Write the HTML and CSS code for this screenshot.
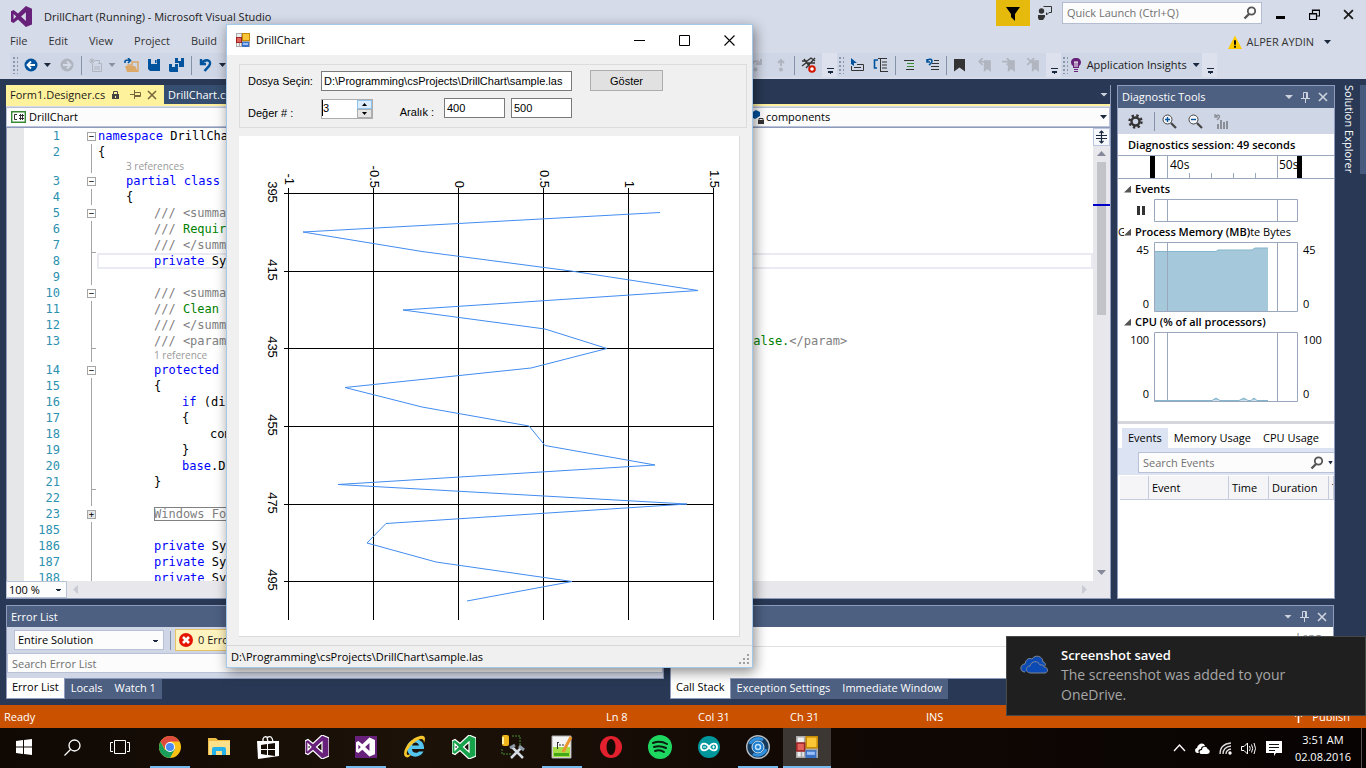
FILE: index.html
```html
<!DOCTYPE html>
<html lang="en">
<head>
<meta charset="utf-8">
<title>DrillChart (Running) - Microsoft Visual Studio</title>
<link rel="stylesheet" href="styles.css">
</head>
<body>
<svg class="defs" aria-hidden="true">
  <symbol id="pin" viewBox="0 0 9 11"><path d="M2.500 6V.5H6.500V6M5.500 1V6M0 6.500H9M4.500 7V11" fill="none" stroke="currentColor"/></symbol>
  <symbol id="cross" viewBox="0 0 10 10"><path d="M1 1L9 9M9 1L1 9" fill="none" stroke="currentColor" stroke-width="1.600"/></symbol>
  <symbol id="lens" viewBox="0 0 14 14"><circle cx="8.500" cy="5" r="3.700" fill="none" stroke="currentColor" stroke-width="1.800"/><path d="M6 8L1.500 12.500" stroke="currentColor" stroke-width="2.400"/></symbol>
  <symbol id="vs" viewBox="0 0 24 24"><path fill-rule="evenodd" d="M17 0L24 3V21L17 24L8 15.500L3 19.500L0 18V6L3 4.500L8 8.500ZM17 7L11.500 12L17 17ZM3 9V15L6 12Z"/></symbol>
  <symbol id="form" viewBox="0 0 14 14"><rect width="14" height="14" fill="#a9a9a9"/><path d="M1 1H5V4H1ZM1 10H3V13H1ZM4 10H5V13H4ZM12 10H13V13H12Z" fill="#eee"/><rect x="6" y="0" width="8" height="8" fill="#c58b05"/><rect x="7" y="1" width="6" height="6" fill="#fbc635"/><rect x="0" y="4" width="6" height="6" fill="#9c2727"/><rect x="1" y="5" width="4" height="4" fill="#e3625c"/><rect x="6" y="9" width="7" height="5" fill="#3b71c4"/><rect x="7" y="10" width="5" height="2" fill="#9ac0f7"/></symbol>
  <symbol id="mark" viewBox="0 0 12 12"><path d="M5 2H11V12L8 9.500L5 12Z" fill="#b1b5c0"/></symbol>
</svg>

<header class="head">
  <div class="titlebar">
    <svg class="vslogo" viewBox="0 0 24 24"><use href="#vs"/></svg>
    <h1 class="apptitle">DrillChart (Running) - Microsoft Visual Studio</h1>
    <button class="flag" aria-label="Notifications"><svg width="14" height="15" viewBox="0 0 14 15"><path d="M0 1H14L9 8V15L5 11V8Z"/></svg></button>
    <button class="feedback" aria-label="Send feedback"><svg width="16" height="16" viewBox="0 0 16 16"><path d="M6.500 1.500H14.500V7.500H12L9.500 10V7.500" fill="none" stroke="#333"/><circle cx="4.500" cy="6" r="2.700" fill="#333"/><path d="M1 10H8V12L6 15H2L1 13Z" fill="#333"/></svg></button>
    <label class="quick"><input type="text" aria-label="Quick Launch" placeholder="Quick Launch (Ctrl+Q)"><svg width="14" height="14"><use href="#lens"/></svg></label>
    <button class="winbtn" aria-label="Minimize"><svg width="11" height="11" viewBox="0 0 11 11"><path d="M1 7H10V10H1Z"/></svg></button>
    <button class="winbtn" aria-label="Restore"><svg width="11" height="11" viewBox="0 0 11 11"><path d="M3.500 4V1H10.500V7H8M.5 4.500H7.500V10.500H.5ZM3 1.500H10M0 5H8" fill="none" stroke="#000" stroke-width="1.200"/></svg></button>
    <button class="winbtn" aria-label="Close"><svg width="11" height="11" viewBox="0 0 10 10"><use href="#cross"/></svg></button>
  </div>
  <nav class="menubar">
    <a href="#file">File</a><a href="#edit">Edit</a><a href="#view">View</a><a href="#project">Project</a><a href="#build">Build</a>
    <button class="user"><svg width="14" height="15" viewBox="0 0 15 15"><path d="M7.500 0L15 14.500H0Z" fill="#fc0"/><path d="M6.500 5H8.500V10H6.500ZM6.500 11H8.500V13H6.500Z"/></svg>ALPER AYDIN<i class="arr"></i></button>
  </nav>
  <div class="toolbar">
    <div class="tools left">
      <i class="grip"></i>
      <button aria-label="Back"><svg width="14" height="14" viewBox="0 0 14 14"><circle cx="7" cy="7" r="6.500" fill="#00539c"/><path d="M11 7H4M7 3.500L3.500 7L7 10.500" fill="none" stroke="#fff" stroke-width="1.800"/></svg></button>
      <i class="arr"></i>
      <button aria-label="Forward"><svg width="14" height="14" viewBox="0 0 14 14"><circle cx="7" cy="7" r="6.500" fill="#b1b5c0"/><path d="M3 7H10M7 3.500L10.500 7L7 10.500" fill="none" stroke="#d6dbe9" stroke-width="1.800"/></svg></button>
      <i class="sep"></i>
      <button aria-label="New"><svg width="14" height="14" viewBox="0 0 14 14"><path d="M6 2.500H10.500V6M3.500 6V13.500H12.500V5.500H9M5 9H11M5 11H11M3 0V6M0 3H6M1 1L5 5M5 1L1 5" fill="none" stroke="#b1b5c0"/></svg></button>
      <i class="arr dim"></i>
      <button aria-label="Open"><svg width="16" height="14" viewBox="0 0 16 14"><path d="M4 13V7H8V4H14V14H10" fill="none" stroke="#dba868" stroke-width="1.500"/><path d="M1 8H11L14 14H3Z" fill="#dba868"/><path d="M1 5V3.500C1 2 2 2 6 2M4 0L6.500 2.500L4 5" fill="none" stroke="#00539c" stroke-width="1.600"/></svg></button>
      <button aria-label="Save"><svg width="14" height="14" viewBox="0 0 14 14"><path fill-rule="evenodd" d="M1 1H13V13H3L1 11ZM4 1V6H10V1ZM8 2H9.500V5H8Z" fill="#00539c"/></svg></button>
      <button aria-label="Save all"><svg width="16" height="14" viewBox="0 0 16 14"><path fill-rule="evenodd" d="M6 0H15V9H10V5H6ZM9 0V3H12V0ZM0 6H9V14H1L0 13ZM3 6V9H6V6Z" fill="#00539c"/></svg></button>
      <i class="sep"></i>
      <button aria-label="Undo"><svg width="14" height="14" viewBox="0 0 14 14"><path d="M2 1V6H7M2.500 5.500C5 1 12 1 11 6C10.500 8.500 8 10 5.500 13" fill="none" stroke="#00539c" stroke-width="2.400"/></svg></button>
      <i class="arr"></i>
    </div>
    <div class="tools mid">
      <button aria-label="Step over"><svg width="14" height="14" viewBox="0 0 14 14"><path d="M2 8C2 2 9 2 10 6M6 6H11V1" fill="none" stroke="#b1b5c0" stroke-width="2"/><circle cx="5.500" cy="11.500" r="2" fill="#b1b5c0"/></svg></button>
      <button aria-label="Step out"><svg width="14" height="14" viewBox="0 0 14 14"><path d="M7 8V2M4 5L7 2L10 5" fill="none" stroke="#b1b5c0" stroke-width="2"/><circle cx="7" cy="11.500" r="2" fill="#b1b5c0"/></svg></button>
      <i class="sep"></i>
      <button aria-label="Breakpoints"><svg width="16" height="16" viewBox="0 0 16 16"><path d="M1 4H6L10 1L14 4M1 9L5 6H14M3 2L9 10M14 1L5 11" fill="none" stroke="#333" stroke-width="1.300"/><circle cx="11" cy="12" r="2.800" fill="#fff" stroke="#d41500" stroke-width="2"/></svg></button>
      <i class="more"></i><i class="grip"></i>
      <button aria-label="Select"><svg width="14" height="14" viewBox="0 0 14 14"><path d="M1 0L7 5L4 5L4 8L1 6Z" fill="#00539c"/><path d="M1.500 8V12.500H13.500V6.500H7M4 9.500H11" fill="none" stroke="#333"/></svg></button>
      <button aria-label="Members"><svg width="16" height="14" viewBox="0 0 16 14"><path d="M5 2H1.500V10H4M2 2H5" fill="none" stroke="#00539c" stroke-width="1.600"/><path d="M5 .5H14M7.500 0V14M9 4H14M9 7H14M9 10H14M7 13.500H15" fill="none" stroke="#333"/></svg></button>
      <i class="sep"></i>
      <button aria-label="Comment"><svg width="14" height="14" viewBox="0 0 14 14"><path d="M2 2.500H12M4 11.500H12" stroke="#333"/><path d="M5 5.500H12M5 8.500H12" stroke="#388a34"/></svg></button>
      <button aria-label="Uncomment"><svg width="14" height="14" viewBox="0 0 14 14"><path d="M1 1V4H4M1 4C1 1 6 0 6 3C6 5 4 6 3 7" fill="none" stroke="#00539c" stroke-width="1.600"/><path d="M8 2.500H13M6 5.500H13M5 8.500H13M5 11.500H13" stroke="#333"/></svg></button>
      <i class="sep"></i>
      <button aria-label="Bookmark"><svg width="14" height="14" viewBox="0 0 14 14"><path d="M1 1H12V13.500L6.500 9.500L1 13.500Z" fill="#333"/></svg></button>
      <button aria-label="Previous bookmark"><svg width="14" height="14" viewBox="0 0 12 12"><use href="#mark"/><path d="M8 3H1M4 0L1 3L4 6" fill="none" stroke="#b1b5c0" stroke-width="1.500"/></svg></button>
      <button aria-label="Next bookmark"><svg width="14" height="14" viewBox="0 0 12 12"><use href="#mark"/><path d="M0 3H7M4 0L7 3L4 6" fill="none" stroke="#b1b5c0" stroke-width="1.500"/></svg></button>
      <button aria-label="Clear bookmarks"><svg width="14" height="14" viewBox="0 0 12 12"><use href="#mark"/><path d="M1 0L7 6M7 0L1 6" stroke="#b1b5c0" stroke-width="1.500"/></svg></button>
      <i class="more"></i><i class="grip"></i>
      <button class="insights"><svg width="10" height="15" viewBox="0 0 10 15"><path d="M5 0C11 0 11 6 8 8V10H2V8C-1 6-1 0 5 0ZM3 11H7V12H3ZM3 13H7V14H3Z" fill="#68217a"/><path d="M3 4H7M4 4V9M6 4V9" fill="none" stroke="#fff"/></svg>Application Insights<i class="arr"></i></button>
      <i class="more"></i>
    </div>
  </div>
</header>

<main class="work">
  <section class="editor">
    <div class="tabs">
      <a class="doc on" href="#designer">Form1.Designer.cs<svg width="7" height="8" viewBox="0 0 7 8"><path d="M1.500 3V.5H5.500V3" fill="none" stroke="#444"/><path fill-rule="evenodd" d="M0 3H7V8H0ZM3 5V7H4V5Z" fill="#444"/></svg><svg class="side" width="9" height="11"><use href="#pin"/></svg><svg width="10" height="10"><use href="#cross"/></svg></a>
      <a class="doc" href="#drill">DrillChart.cs</a>
      <i class="arr light"></i>
    </div>
    <div class="navbar">
      <button class="scope"><svg width="15" height="12" viewBox="0 0 15 12"><path d="M.7.7H14.300V11.300H.7Z" fill="#fff" stroke="#388a34" stroke-width="1.400"/><path d="M6 3.500H3.500V8.500H6M9.500 3V9M11.500 3V9M8 4.500H13M8 7.500H13" fill="none" stroke="#333"/></svg>DrillChart</button>
      <button class="scope member"><svg width="15" height="15" viewBox="0 0 15 15"><path d="M0 3L5 0L9 2V6L4 9L0 7Z" fill="#00539c"/><path d="M8 10.500V8.500H12V10.500" fill="none" stroke="#333"/><path d="M7 10H13V14H7Z" fill="#333"/></svg>components<i class="arr"></i></button>
    </div>
    <div class="codearea">
      <div class="code">
        <div class="row"><b>1</b><i class="fold box">−</i><code><em>namespace</em> DrillChart</code></div>
        <div class="row"><b>2</b><i class="fold"></i><code>{</code></div>
        <div class="row ref"><b></b><i class="fold"></i><code class="in1">3 references</code></div>
        <div class="row"><b>3</b><i class="fold box">−</i><code class="in1"><em>partial</em> <em>class</em> Form1</code></div>
        <div class="row"><b>4</b><i class="fold"></i><code class="in1">{</code></div>
        <div class="row"><b>5</b><i class="fold box">−</i><code class="in2"><s>/// &lt;summary&gt;</s></code></div>
        <div class="row"><b>6</b><i class="fold"></i><code class="in2"><s>///</s> <u>Required designer variable.</u></code></div>
        <div class="row"><b>7</b><i class="fold end"></i><code class="in2"><s>/// &lt;/summary&gt;</s></code></div>
        <div class="row current"><b>8</b><i class="fold"></i><code class="in2"><em>private</em> System.ComponentModel</code></div>
        <div class="row"><b>9</b><i class="fold"></i><code></code></div>
        <div class="row"><b>10</b><i class="fold box">−</i><code class="in2"><s>/// &lt;summary&gt;</s></code></div>
        <div class="row"><b>11</b><i class="fold"></i><code class="in2"><s>///</s> <u>Clean up any resources being used.</u></code></div>
        <div class="row"><b>12</b><i class="fold"></i><code class="in2"><s>/// &lt;/summary&gt;</s></code></div>
        <div class="row"><b>13</b><i class="fold end"></i><code class="in2 lead"><s>/// &lt;param name="disposing"&gt;</s></code><code><u>false.</u><s>&lt;/param&gt;</s></code></div>
        <div class="row ref"><b></b><i class="fold"></i><code class="in2">1 reference</code></div>
        <div class="row"><b>14</b><i class="fold box">−</i><code class="in2"><em>protected</em> <em>override</em></code></div>
        <div class="row"><b>15</b><i class="fold"></i><code class="in2">{</code></div>
        <div class="row"><b>16</b><i class="fold"></i><code class="in3"><em>if</em> (disposing)</code></div>
        <div class="row"><b>17</b><i class="fold"></i><code class="in3">{</code></div>
        <div class="row"><b>18</b><i class="fold"></i><code class="in4">components.Dispose();</code></div>
        <div class="row"><b>19</b><i class="fold"></i><code class="in3">}</code></div>
        <div class="row"><b>20</b><i class="fold"></i><code class="in3"><em>base</em>.Dispose(disposing);</code></div>
        <div class="row"><b>21</b><i class="fold end"></i><code class="in2">}</code></div>
        <div class="row"><b>22</b><i class="fold"></i><code></code></div>
        <div class="row"><b>23</b><i class="fold box shut">+</i><code class="in2"><s class="region">Windows Form Designer</s></code></div>
        <div class="row"><b>185</b><i class="fold"></i><code></code></div>
        <div class="row"><b>186</b><i class="fold"></i><code class="in2"><em>private</em> System.Windows</code></div>
        <div class="row"><b>187</b><i class="fold"></i><code class="in2"><em>private</em> System.Windows</code></div>
        <div class="row"><b>188</b><i class="fold"></i><code class="in2"><em>private</em> System.Windows</code></div>
      </div>
      <div class="vscroll">
        <button class="split" aria-label="Split"><svg width="13" height="14" viewBox="0 0 13 14"><path d="M1 5.500H12M1 8.500H12M6.500 1V13M4.500 3L6.500 1L8.500 3M4.500 11L6.500 13L8.500 11" fill="none" stroke="#1b293e" stroke-width="1.200"/></svg></button>
        <i class="up"></i><i class="thumb"></i><i class="down"></i>
      </div>
    </div>
    <div class="editfoot"><select class="zoomsel" aria-label="Zoom"><option>100 %</option></select><i class="lft"></i><i class="rgt"></i></div>
  </section>

  <aside class="diag">
    <h2 class="ptitle">Diagnostic Tools<span class="pact"><i class="arr light"></i><svg width="9" height="11"><use href="#pin"/></svg><svg width="10" height="10"><use href="#cross"/></svg></span></h2>
    <div class="dtools">
      <button aria-label="Settings"><svg width="15" height="15" viewBox="0 0 15 15"><circle cx="7.500" cy="7.500" r="4" fill="none" stroke="#333" stroke-width="2.400"/><circle cx="7.500" cy="7.500" r="6" fill="none" stroke="#333" stroke-width="2.400" stroke-dasharray="2.360 2.360"/></svg></button>
      <i class="sep"></i>
      <button aria-label="Zoom in"><svg width="15" height="15" viewBox="0 0 15 15"><circle cx="5.500" cy="5.500" r="4.500" fill="#f4f6fa" stroke="#444"/><path d="M9 9L14 14" stroke="#444" stroke-width="2.200"/><path d="M3 5.500H8M5.500 3V8" stroke="#00539c" stroke-width="1.400"/></svg></button>
      <button aria-label="Zoom out"><svg width="15" height="15" viewBox="0 0 15 15"><circle cx="5.500" cy="5.500" r="4.500" fill="#f4f6fa" stroke="#444"/><path d="M9 9L14 14" stroke="#444" stroke-width="2.200"/><path d="M3 5.500H8" stroke="#00539c" stroke-width="1.400"/></svg></button>
      <button aria-label="Reset view"><svg width="15" height="15" viewBox="0 0 15 15"><path d="M3 15V10M6 15V6M9 15V8M12 15V7" transform="translate(1 0)" stroke="#8d8f98" stroke-width="2"/><path d="M1 0V3H4M1 3C3 0 7 1 5 4L3 6" fill="none" stroke="#8d8f98" stroke-width="1.300"/></svg></button>
    </div>
    <h3 class="session">Diagnostics session: 49 seconds</h3>
    <svg class="ruler" viewBox="0 0 216 24" role="img" aria-label="Timeline"><path d="M0 .5H216M0 23.500H216M49.500 1V23M159.500 1V23M71.500 18V23M93.500 18V23M115.500 18V23M137.500 18V23" stroke="#9aa7bd" fill="none"/><text x="52" y="14">40s</text><text x="161" y="14">50s</text><path d="M32 1H37V23H32ZM179 1H184V23H179Z"/></svg>
    <h4 class="lane"><i class="tri"></i>Events</h4>
    <div class="graph"><span class="ax pause"><svg width="9" height="9" viewBox="0 0 9 9"><path d="M0 0H3V9H0ZM5 0H8V9H5Z" fill="#333"/></svg></span><svg class="plot low" viewBox="0 0 144 23"><path d="M.5.5H143.500V22.500H.5ZM13.500 0V23M123.500 0V23"/></svg></div>
    <h4 class="lane mem"><span class="gc">G</span><i class="tri"></i>Process Memory (MB)<span class="bytes">te Bytes</span></h4>
    <div class="graph"><span class="ax"><span>45</span><span>0</span></span><svg class="plot" viewBox="0 0 144 70"><path class="fill" d="M1 9.500H62L64 8H98L101 6H114V69H1Z"/><path class="edge" d="M1 9.500H62L64 8H98L101 6H114"/><path d="M.5.500H143.500V69.500H.5ZM13.500 0V70M123.500 0V70"/></svg><span class="ax r"><span>45</span><span>0</span></span></div>
    <h4 class="lane"><i class="tri"></i>CPU (% of all processors)</h4>
    <div class="graph"><span class="ax"><span>100</span><span>0</span></span><svg class="plot" viewBox="0 0 144 70"><path d="M.5.500H143.500V69.500H.5ZM13.500 0V70M123.500 0V70"/><path class="edge shade" d="M1 68.500H58L62 66L66 68.500H85L90 66L94 68.500H97L100 66L103 68.500H114"/></svg><span class="ax r"><span>100</span><span>0</span></span></div>
    <hr class="divider">
    <nav class="dtabs"><a class="on" href="#ev">Events</a><a href="#mu">Memory Usage</a><a href="#cu">CPU Usage</a></nav>
    <div class="dsearch"><label><input type="text" aria-label="Search Events" placeholder="Search Events"><svg width="14" height="14"><use href="#lens"/></svg><i class="arr"></i></label></div>
    <table class="events"><thead><tr><th class="c0"></th><th class="c1">Event</th><th class="c2">Time</th><th class="c3">Duration</th><th>T</th></tr></thead></table>
  </aside>
  <aside class="rail"><a href="#sol">Solution Explorer</a><i></i></aside>
</main>

<section class="panels">
  <div class="panel errors">
    <div class="pbox">
      <h2 class="ptitle">Error List</h2>
      <div class="filters"><select aria-label="Scope"><option>Entire Solution</option></select><i class="sep"></i><button class="errbtn"><svg width="14" height="14" viewBox="0 0 14 14"><circle cx="7" cy="7" r="7" fill="#e51400"/><path d="M4 4L10 10M10 4L4 10" stroke="#fff" stroke-width="2.600"/></svg>0 Errors</button></div>
      <input class="esearch" type="text" aria-label="Search Error List" placeholder="Search Error List">
    </div>
    <nav class="ptabs"><a class="on" href="#el">Error List</a><a href="#lo">Locals</a><a href="#w1">Watch 1</a></nav>
  </div>
  <div class="panel stack">
    <div class="pbox">
      <h2 class="ptitle">Call Stack<span class="pact"><i class="arr light"></i><svg width="9" height="11"><use href="#pin"/></svg><svg width="10" height="10"><use href="#cross"/></svg></span></h2>
      <div class="cols"><span>Lang</span></div>
    </div>
    <nav class="ptabs"><a class="on" href="#cs">Call Stack</a><a href="#es">Exception Settings</a><a href="#iw">Immediate Window</a></nav>
  </div>
</section>

<footer class="status"><span class="ready">Ready</span><span>Ln 8</span><span>Col 31</span><span class="ch">Ch 31</span><span class="ins">INS</span><a href="#publish"><svg width="9" height="11" viewBox="0 0 9 11"><path d="M4.500 11V1M1 4.500L4.500 1L8 4.500" fill="none" stroke="#fff" stroke-width="1.600"/></svg>Publish</a></footer>

<nav class="taskbar">
  <button class="sys" aria-label="Start"><svg width="16" height="16" viewBox="0 0 16 16"><path d="M0 2L7 1V7.500H0ZM8 1L16 0V7.500H8ZM0 8.500H7V15L0 14ZM8 8.500H16V16L8 15Z" fill="#fff"/></svg></button>
  <button class="sys" aria-label="Search"><svg width="17" height="17" viewBox="0 0 17 17"><circle cx="10.500" cy="6.500" r="5.500" fill="none" stroke="#fff" stroke-width="1.300"/><path d="M6.500 10.500L.5 16.500" stroke="#fff" stroke-width="1.300"/></svg></button>
  <button class="sys wide" aria-label="Task view"><svg width="20" height="14" viewBox="0 0 20 14"><path d="M4.500.5H15.500V13.500H4.500ZM3 2.500H.5V11.500H3M17 2.500H19.500V11.500H17" fill="none" stroke="#fff"/></svg></button>
  <button class="run" aria-label="Chrome"><svg width="22" height="22" viewBox="0 0 22 22"><circle cx="11" cy="11" r="11" fill="#fbc116"/><path d="M1.500 5.500A11 11 0 0 0 11 22L16 13L6 14Z" fill="#1a9f5b"/><path d="M1.500 5.500A11 11 0 0 1 20.500 5.500H11L6 13Z" fill="#de4a3d"/><circle cx="11" cy="11" r="5" fill="#fff"/><circle cx="11" cy="11" r="4" fill="#4a8af4"/></svg></button>
  <button aria-label="File Explorer"><svg width="22" height="20" viewBox="0 0 22 20"><path d="M0 1H8L10 3H22V18H0Z" fill="#eebb44"/><path d="M1 4H22V18H1Z" fill="#ffe08a"/><path d="M4 18V12Q4 10 6 10H16Q18 10 18 12V18H14V14H8V18Z" fill="#25b1ec"/></svg></button>
  <button aria-label="Store"><svg width="22" height="24" viewBox="0 0 22 24"><path d="M6 7V4Q7 1 10 2L11 7M10 3Q15-1 16 7" fill="none" stroke="#fff" stroke-width="1.300"/><path d="M0 6L22 6V21L1 24Z" fill="#fff"/><path d="M4 10L10 9V14H4ZM11 9L18 8V14H11ZM4 15H10V20L4 19ZM11 15H18V21L11 20Z" fill="#160d04"/></svg></button>
  <button aria-label="Visual Studio"><svg width="24" height="24"><use href="#vs" fill="#68217a" stroke="#fff" stroke-width="1.200"/></svg></button>
  <button class="run" aria-label="Visual Studio debugger"><svg class="vsbox" width="22" height="22"><use href="#vs" x="1" y="1" width="19" height="20" fill="#fff"/></svg></button>
  <button aria-label="Internet Explorer"><svg width="24" height="24" viewBox="0 0 24 24"><path fill-rule="evenodd" d="M21 14H9C9 18 14 19 16 16.500H20.500C17 24.500 4 23 4 13C4 2 22 1 21 14M9 10.500H16C15 6.500 10 6.500 9 10.500" fill="#53c5ee"/><path d="M3 22C-3 19 6 3 17 1C22 0 23 3 21 8C21 4 19 3 15 5C7 9 1 19 5 20L8 19C7 22 4 23 3 22Z" fill="#f6c62c"/></svg></button>
  <button aria-label="Visual Studio Team"><svg width="24" height="24"><use href="#vs" fill="#15a24a" stroke="#fff" stroke-width="1.200"/></svg></button>
  <button aria-label="Tools"><svg width="24" height="24" viewBox="0 0 24 24"><rect x="1" y="0" width="7" height="11" rx="2" fill="#f1b51c"/><path d="M2 2V9" stroke="#fff0a0" stroke-width="2"/><path d="M11 1H19V10M1 14V19H10" fill="none" stroke="#4a8f37" stroke-dasharray="2 1"/><path d="M11 12L22 23M21 12L10 23" stroke="#d5dbe2" stroke-width="2.500"/><path d="M9 13L14 10M18 11L23 15" stroke="#8e9aa8" stroke-width="3"/></svg></button>
  <button class="run" aria-label="Notepad"><svg width="22" height="24" viewBox="0 0 22 24"><path d="M1 1H20V23H1Z" fill="#f4f4f4" stroke="#aaa"/><path d="M2 12H19V22H2Z" fill="#a5df45"/><path d="M3 18H18V21H3Z" fill="#43a818"/><path d="M6.500 7V14M8 10H10M11 10H13M6 7.500H8" stroke="#333"/><path d="M20 2L12 17" stroke="#e9962e" stroke-width="3"/></svg></button>
  <button aria-label="Opera"><svg width="22" height="22" viewBox="0 0 22 22"><circle cx="11" cy="11" r="11" fill="#e3202d"/><ellipse cx="11" cy="11" rx="4.500" ry="8" fill="#160a05"/></svg></button>
  <button aria-label="Spotify"><svg width="24" height="24" viewBox="0 0 24 24"><circle cx="12" cy="12" r="12" fill="#1ed760"/><path d="M5 8Q12 5 19 9M6 12Q12 10 18 13M7 16Q12 14 16 17" fill="none" stroke="#0b1d10" stroke-width="2" stroke-linecap="round"/></svg></button>
  <button aria-label="Arduino"><svg width="22" height="22" viewBox="0 0 22 22"><circle cx="11" cy="11" r="11" fill="#00979c"/><path d="M11 11C8 6 3 7 3 11S8 16 11 11C14 6 19 7 19 11S14 16 11 11" fill="none" stroke="#fff" stroke-width="1.800"/><path d="M5 11H8M14 11H17M15.500 9.500V12.500" stroke="#fff"/></svg></button>
  <button class="run" aria-label="Sync"><svg width="24" height="24" viewBox="0 0 24 24"><circle cx="12" cy="12" r="11.300" fill="#163a5b" stroke="#b5bcc3" stroke-width="1.400"/><path d="M4 9A9 9 0 0 1 17 5M20 14A9 9 0 0 1 7 19" fill="none" stroke="#2c8fe0" stroke-width="3"/><circle cx="12" cy="12" r="6" fill="#1f7dd0" stroke="#d0e8fb"/><circle cx="12" cy="12" r="2.500" fill="none" stroke="#bfe3ff" stroke-width="1.500"/></svg></button>
  <button class="run act" aria-label="DrillChart"><svg width="22" height="22"><use href="#form"/></svg></button>
  <div class="tray">
    <svg width="13" height="8" viewBox="0 0 13 8"><path d="M1 7L6.500 1L12 7" fill="none" stroke="#fff" stroke-width="1.300"/></svg>
    <svg width="15" height="11" viewBox="0 0 15 11"><path d="M2 10C-1 9 0 5 2 5C3 0 9-1 10 3C7 3 6 4 6 6C3 6 3 9 4 10Z" fill="#fff"/><path d="M6 11C4 10 4 7 7 7C7 3 12 3 12.500 6C16 7 15 11 12 11Z" fill="#fff"/></svg>
    <svg width="13" height="13" viewBox="0 0 13 13"><path d="M1 12Q1 2 12 1M4 12Q4 5 12 4M7 12Q7 8 12 7" fill="none" stroke="#ddd" stroke-width="1.300"/><circle cx="11" cy="11" r="1.700" fill="#fff"/></svg>
    <svg width="16" height="13" viewBox="0 0 16 13"><path d="M.5 4.500H3L6.500 1V12L3 8.500H.5ZM8.500 4Q10 6.500 8.500 9M10.500 2.500Q13 6.500 10.500 10.500M13 1Q16 6.500 13 12" fill="none" stroke="#fff"/></svg>
    <svg width="16" height="15" viewBox="0 0 16 15"><path d="M0 0H16V12H10L8 15V12H0Z" fill="#fff"/><path d="M3 3.500H13M3 6.500H13M3 9.500H9" stroke="#111"/></svg>
    <time>3:51 AM<br>02.08.2016</time>
  </div>
</nav>

<section class="win" role="dialog" aria-label="DrillChart">
  <header class="wtitle"><svg width="14" height="14"><use href="#form"/></svg><span>DrillChart</span>
    <button aria-label="Minimize"><svg width="11" height="11" viewBox="0 0 11 11"><path d="M0 5.500H11" stroke="#000"/></svg></button>
    <button aria-label="Maximize"><svg width="11" height="11" viewBox="0 0 11 11"><path d="M.5.5H10.500V10.500H.5Z" fill="none" stroke="#000"/></svg></button>
    <button aria-label="Close"><svg width="11" height="11" viewBox="0 0 11 11"><path d="M.5.5L10.500 10.500M10.500.5L.5 10.500" stroke="#000" stroke-width="1.100"/></svg></button>
  </header>
  <form class="fields">
    <label for="f">Dosya Seçin:</label><input class="file" id="f" type="text" value="D:\Programming\csProjects\DrillChart\sample.las"><button class="go" type="button">Göster</button>
    <label class="drop" for="n">Değer # :</label><span class="spin"><input id="n" type="text" value="3"><span><button type="button" aria-label="Up"><i class="up"></i></button><button type="button" aria-label="Down"><i class="down"></i></button></span></span><label class="range" for="a">Aralık :</label><input id="a" type="text" value="400"><input type="text" aria-label="Aralık end" value="500">
  </form>
  <svg class="chart" viewBox="0 0 500 500" role="img" aria-label="Drill chart">
    <path class="grid" d="M49.500 52V484M134.500 52V484M219.500 52V484M304.500 52V484M389.500 52V484M474.500 52V484M45 57.500H475M45 135.500H475M45 212.500H475M45 290.500H475M45 368.500H475M45 445.500H475"/>
    <polyline points="421,76.500 64,96 183,115.500 332,135 459,154.500 164,174 306,193 368,212.500 292,232 106,251.500 183,271 290,290 306,309.500 416,329 99,348.500 448,368 147,387.500 128,407 197,426 333,445.500 228,465"/>
    <g class="top"><text transform="translate(46 49) rotate(90)">-1</text><text transform="translate(131 52) rotate(90)">-0.5</text><text transform="translate(216 52) rotate(90)">0</text><text transform="translate(301 52) rotate(90)">0.5</text><text transform="translate(386 52) rotate(90)">1</text><text transform="translate(471 52) rotate(90)">1.5</text></g>
    <g class="side"><text transform="translate(29 56) rotate(90)">395</text><text transform="translate(29 134) rotate(90)">415</text><text transform="translate(29 211) rotate(90)">435</text><text transform="translate(29 289) rotate(90)">455</text><text transform="translate(29 367) rotate(90)">475</text><text transform="translate(29 444) rotate(90)">495</text></g>
  </svg>
  <footer class="wstatus">D:\Programming\csProjects\DrillChart\sample.las<svg width="11" height="11" viewBox="0 0 11 11"><path d="M8 0H10V2H8ZM4 4H6V6H4ZM8 4H10V6H8ZM0 8H2V10H0ZM4 8H6V10H4ZM8 8H10V10H8Z" fill="#a0a0a0"/></svg></footer>
</section>

<section class="toast" role="status">
  <svg width="28" height="19" viewBox="0 0 28 19"><path d="M5 17C-1 17 0 9 5 9C6 3 10 3 12 4C15-1 23 1 23 7C25 7 26 9 25 11" fill="#0c4ab6" stroke="#7f8793"/><path d="M11 18C5 18 5 11 10 11C11 6 18 5 20 10C23 9 24 11 24 12C29 12 28 18 25 18Z" fill="#0c4ab6" stroke="#7f8793"/></svg>
  <div><strong>Screenshot saved</strong><p>The screenshot was added to your OneDrive.</p></div>
</section>
</body>
</html>
```
FILE: styles.css
```css
* { box-sizing: border-box; }
body { margin: 0; height: 100vh; min-height: 700px; display: flex; flex-direction: column; position: relative; overflow: hidden; background: #293955; color: #1b1b1b; font: 11px/16px "Open Sans", "Noto Sans", sans-serif; }
button, input, select { font: inherit; color: inherit; }
button { border: 0; padding: 0; background: none; }
a { color: inherit; text-decoration: none; }
h1, h2, h3, h4, p { margin: 0; font: inherit; }
svg { display: block; flex: none; }
i, em, s, u { font-style: normal; text-decoration: none; }
.defs { position: absolute; width: 0; height: 0; }

.arr { width: 7px; height: 4px; flex: none; background: #1b293e; clip-path: polygon(0 0, 100% 0, 50% 100%); }
.arr.dim { background: #8d919c; }
.arr.light { width: 8px; background: #ced4dd; }
.sep { width: 1px; height: 19px; flex: none; background: #8591a8; }
.grip { width: 6px; height: 18px; flex: none; background: radial-gradient(circle, #8b95ab 1px, transparent 1px) 0 0 / 4px 4px; }
.more { width: 15px; height: 25px; flex: none; background: linear-gradient(#1b293e, #1b293e) 5px 15px / 7px 1px no-repeat, linear-gradient(#1b293e, #1b293e) 6px 18px / 5px 2px no-repeat, linear-gradient(#1b293e, #1b293e) 8px 20px / 1px 1px no-repeat, #dde1ed; }

.head { background: #d6dbe9; flex: none; height: 79px; }
.titlebar { display: flex; height: 29px; padding: 0 9px 0 11px; }
.vslogo { width: 21px; height: 21px; margin-top: 6px; fill: #68217a; }
.apptitle { flex: 1; margin: 9px 0 0 12px; font-size: 11px; }
.flag { width: 34px; height: 26px; background: #e6b90d; display: grid; place-items: center; }
.feedback { width: 16px; margin: 5px 9px 0 7px; align-self: flex-start; }
.quick { display: flex; align-items: center; width: 200px; height: 22px; margin: 2px 10px 0 0; padding: 0 4px; background: #fcfcfc; border: 1px solid #b5bdd2; color: #555; }
.quick input { flex: 1; min-width: 0; border: 0; padding: 0; background: none; }
::placeholder { color: #717171; opacity: 1; }
.winbtn { width: 17px; height: 28px; margin-right: 17px; display: grid; place-items: center; }
.winbtn:last-child { margin-right: 0; }
.menubar { display: flex; gap: 21px; height: 24px; padding: 4px 35px 0 10px; color: #333; }
.user { display: flex; align-items: center; gap: 4px; margin: 0 0 0 auto; height: 18px; }
.user .arr { margin-left: 6px; }
.toolbar { display: flex; justify-content: space-between; padding: 0 150px 0 10px; }
.tools { display: flex; align-items: center; height: 24px; background: #cfd6e5; }
.tools button { width: 22px; height: 22px; display: grid; place-items: center; }
.left { width: 218px; padding-left: 2px; gap: 5px; }
.left .arr { margin: 0 2px 0 -1px; }
.left .grip { margin-right: -1px; }
.left button { width: 18px; }
.mid { gap: 1px; width: 470px; justify-content: space-between; }
.mid .more { height: 24px; margin-right: -1px; }
.tools .insights { display: flex; align-items: center; justify-content: flex-start; gap: 6px; width: auto; }

.work { flex: 1; min-height: 0; display: grid; grid-template-columns: minmax(0, 1fr) 218px 31px; padding: 6px 0 6px 6px; }
.editor { display: flex; flex-direction: column; min-height: 0; margin-right: 6px; border-bottom: 1px solid #8e9bbc; border-right: 1px solid #8e9bbc; }
.tabs { display: flex; align-items: center; height: 20px; flex: none; color: #fff; border-bottom: 1px solid #fff29d; background: #293955; }
.tabs > .arr { margin: 0 2px 0 auto; }
.doc { display: flex; align-items: center; height: 19px; padding: 2px 4px; background: #364e6f; }
.doc.on { width: 158px; height: 20px; gap: 7px; background: #fff29d; color: #1b1b1b; }
.doc.on svg { color: #75683e; }
.doc .side { transform: rotate(90deg); margin-left: 5px; }
.navbar { display: grid; grid-template-columns: 744px minmax(0, 1fr); height: 23px; flex: none; padding: 1px 0 0; border-top: 1px solid #fff29d; border-bottom: 1px solid #8e9bbc; background: #d6dbe9; }
.scope { display: flex; align-items: center; gap: 3px; padding: 0 4px; background: #fcfcfc; border: 1px solid #b8c1d6; color: #000; }
.scope .arr { margin-left: auto; margin-right: -2px; }
.member { gap: 0; padding-left: 0; }
.codearea { flex: 1; min-height: 0; display: flex; background: #fff; }
.code { flex: 1; min-width: 0; overflow: hidden; border-left: 1px solid #8e9bbc; background: linear-gradient(90deg, #e6e7e8 17px, #fff 17px); font: 12px/16px "DejaVu Sans Mono", "Liberation Mono", monospace; color: #000; }
.row { display: flex; height: 16px; }
.row b { width: 53px; flex: none; text-align: right; font-weight: normal; color: #2b91af; }
.row code { font: inherit; white-space: pre; }
.row em { color: #00f; }
.row s { color: #808080; }
.row u { color: #008000; }
.ref { height: 13px; font: 10px/13px "Open Sans", sans-serif; color: #999; }
.ref code { font: inherit; }
.in1 { padding-left: 28px; }
.in2 { padding-left: 56px; }
.in3 { padding-left: 84px; }
.in4 { padding-left: 112px; }
.lead { width: 648px; overflow: hidden; }
.fold { width: 9px; margin: 0 2px 0 27px; flex: none; background: linear-gradient(#a5a5a5, #a5a5a5) 4px 0 / 1px 100% no-repeat; }
.end { background: linear-gradient(#a5a5a5, #a5a5a5) 4px 0 / 1px 100% no-repeat, linear-gradient(#a5a5a5, #a5a5a5) 4px 100% / 5px 1px no-repeat; }
.box { height: 9px; margin-top: 4px; background: #fff; border: 1px solid #a5a5a5; font: 9px/7px "DejaVu Sans Mono", monospace; text-align: center; box-shadow: 0 0 0 1px #fff; }
.shut { background: #e6e7e8; }
.current { background: linear-gradient(#fff, #fff) 92px 2px / calc(100% - 94px) 12px no-repeat, linear-gradient(#eaeaf2, #eaeaf2) 90px 0 / 100% 16px no-repeat; }
.region { outline: 1px solid #808080; outline-offset: -1px; }
.vscroll { width: 17px; display: flex; flex-direction: column; align-items: center; background: #e8e8ec; }
.split { width: 17px; height: 18px; display: grid; place-items: center; border: 1px solid #bcc6de; background: #f5f7fb; }
.up, .down { width: 9px; height: 5px; background: #868999; clip-path: polygon(50% 0, 100% 100%, 0 100%); }
.down { clip-path: polygon(0 0, 100% 0, 50% 100%); }
.vscroll .up { margin: 5px 0 6px; }
.vscroll .down { margin: auto 0 6px; }
.thumb { width: 9px; height: 153px; background: #c2c3c9; position: relative; }
.thumb::after { content: ""; position: absolute; left: -4px; right: -4px; top: 42px; height: 2px; background: #0000c8; }
.editfoot { display: flex; align-items: center; height: 17px; flex: none; background: #e8e8ec; }
select { appearance: none; border: 1px solid #b8c1d6; border-radius: 0; padding: 0 4px; color: #000; background: linear-gradient(#1b293e, #1b293e) right 5px center / 5px 1px no-repeat, linear-gradient(#1b293e, #1b293e) right 6px top calc(50% + 1px) / 3px 1px no-repeat, #fcfcfc; }
.zoomsel { width: 61px; height: 17px; padding: 0 2px; }
.lft, .rgt { width: 5px; height: 9px; margin-left: 6px; background: #c9cad3; clip-path: polygon(100% 0, 100% 100%, 0 50%); }
.rgt { margin: 0 23px 0 auto; clip-path: polygon(0 0, 100% 50%, 0 100%); }

.ptitle { display: flex; align-items: center; justify-content: space-between; height: 22px; flex: none; padding: 0 5px 0 4px; background: #4d6082; color: #fff; }
.pact { display: flex; align-items: center; gap: 8px; padding-right: 1px; color: #ced4dd; }
.diag { display: flex; flex-direction: column; min-height: 0; overflow: hidden; border: 1px solid #8e9bbc; background: #fff; color: #000; }
.dtools { display: flex; align-items: center; gap: 11px; height: 26px; flex: none; padding-left: 10px; background: #cfd6e5; }
.dtools .sep { margin-right: -4px; }
.session { padding: 3px 10px 2px; font-weight: 600; }
.ruler { width: 216px; height: 24px; }
.ruler text { font-size: 12px; }
.lane { display: flex; align-items: center; height: 20px; flex: none; padding-left: 6px; font-weight: 600; white-space: nowrap; }
.tri { width: 7px; height: 7px; margin-right: 4px; flex: none; background: #555; clip-path: polygon(100% 0, 100% 100%, 0 100%); }
.gc, .bytes { font-weight: 400; }
.mem { padding-left: 0; overflow: hidden; }
.gc { width: 6px; overflow: hidden; }
.graph { display: flex; flex: none; }
.ax { width: 36px; display: flex; flex-direction: column; justify-content: space-between; align-items: flex-end; padding: 0 5px 0 0; }
.ax.r { align-items: flex-start; padding: 0 0 0 5px; }
.pause { justify-content: center; padding-right: 8px; }
.plot { width: 144px; height: 70px; fill: none; stroke: #9aa7bd; }
.plot.low { height: 23px; }
.plot .fill { fill: #a6c8db; stroke: none; }
.plot .edge { stroke: #83b5cc; }
.plot .shade { fill: #a6c8db; }
.divider { width: 100%; height: 3px; flex: none; margin: 19px 0 4px; border: 0; background: #d5d5dc; }
.dtabs { display: flex; flex: none; padding-left: 4px; white-space: nowrap; }
.dtabs a { height: 20px; padding: 2px 6px; }
.dtabs .on { background: #dce3f2; }
.dsearch { flex: none; padding: 4px 0 2px 20px; background: #dce3f2; }
.dsearch label { display: flex; align-items: center; height: 21px; padding-left: 4px; border: 1px solid #b8c1d6; border-right: 0; background: #fcfcfc; color: #555; }
.dsearch input { flex: 1; min-width: 0; border: 0; padding: 0; background: none; }
.dsearch .arr { width: 5px; margin: 0 1px 0 4px; }
.events { table-layout: fixed; width: 100%; margin-top: 1px; padding-left: 2px; border-spacing: 0; }
.events th { height: 24px; padding: 0 3px; text-align: left; font-weight: 400; background: #f5f5f7; border-right: 1px solid #c6cbdc; border-bottom: 1px solid #c6cbdc; overflow: hidden; }
.events .c0 { width: 29px; }
.events .c1 { width: 80px; }
.events .c2 { width: 40px; }
.events .c3 { width: 60px; }
.rail { display: flex; justify-content: space-between; align-items: flex-start; padding-left: 6px; color: #fff; }
.rail a { writing-mode: vertical-rl; }
.rail i { width: 6px; height: 89px; background: #465a7d; }

.panels { display: grid; grid-template-columns: 658px minmax(0, 1fr); gap: 6px; flex: none; padding: 0 32px 6px 6px; }
.pbox { height: 74px; border: 1px solid #8e9bbc; background: #fff; }
.errors .pbox { background: #cfd6e5; }
.errors .ptitle, .stack .ptitle { height: 21px; }
.filters { display: flex; align-items: center; gap: 4px; height: 26px; padding-left: 7px; }
.filters select { width: 150px; height: 20px; padding: 0 3px; }
.filters .sep { margin-left: 2px; }
.errbtn { display: flex; align-items: center; gap: 5px; width: 90px; height: 22px; padding-left: 3px; border: 1px solid #e5c365; background: #fff3bf; }
.esearch { display: block; width: 100%; height: 20px; border: 1px solid #b8c1d6; padding: 0 4px; background: #fcfcfc; }
.cols { height: 20px; padding: 2px 12px; border-bottom: 1px solid #e0e3e6; text-align: right; color: #888; }
.ptabs { display: flex; height: 20px; }
.ptabs a { padding: 1px 6px; background: #4d6082; color: #fff; white-space: nowrap; }
.ptabs .on { margin-top: -1px; border: 1px solid #8e9bbc; border-top: 0; padding: 1px 5px; background: #fff; color: #000; }
.status { display: flex; height: 23px; flex: none; padding: 4px 16px 0 4px; background: #ca5100; color: #fff; }
.status span { width: 92px; }
.status .ready { width: 602px; }
.status .ch { width: 136px; }
.status a { display: flex; align-items: center; gap: 9px; margin-left: auto; height: 16px; }

.taskbar { display: flex; height: 40px; flex: none; background: linear-gradient(90deg, #0f0803, #1c1208 30%, #110804 60%, #070302); color: #fff; }
.taskbar button { width: 48px; margin-right: 1px; display: grid; place-items: center; border-bottom: 2px solid transparent; }
.taskbar .sys { margin-right: 0; }
.taskbar .wide { margin-right: 2px; }
.taskbar .run { background: linear-gradient(#76b9ed, #76b9ed) center 38px / 40px 2px no-repeat; }
.taskbar .act { background: #3d3734; border-color: #76b9ed; }
.vsbox { background: #68217a; }
.tray { display: flex; align-items: center; gap: 9px; margin: 0 4px 0 auto; padding-right: 10px; border-right: 1px solid #56524f; }
.tray time { margin-left: 4px; text-align: center; line-height: 17px; }

.win { position: absolute; left: 226px; top: 24px; width: 527px; border: 1px solid #a5c7e8; background: #f0f0f0; color: #000; box-shadow: 2px 4px 12px rgba(0, 0, 0, .45); font: 11px/16px "Liberation Sans", Arial, sans-serif; }
.wtitle { display: flex; align-items: center; height: 30px; padding-left: 9px; background: #fff; font: 11px/16px "Open Sans", sans-serif; }
.wtitle span { flex: 1; padding-left: 6px; }
.wtitle button { width: 45px; height: 29px; display: grid; place-items: center; }
.fields { display: grid; grid-template-columns: 73px 52px 71px 61px 67px 91px; row-gap: 7px; align-items: start; margin: 9px 5px 0 12px; padding: 5px 0 8px 8px; height: 64px; border: 1px solid #dcdcdc; }
.fields input { width: 61px; height: 20px; padding: 0 2px; border: 1px solid #7a7a7a; background: #fff; }
.fields label { padding-top: 3px; }
.fields .file { grid-column: span 4; width: 251px; margin-top: 1px; }
.fields .go { width: 73px; height: 21px; justify-self: end; border: 1px solid #adadad; background: #e1e1e1; }
.fields .drop { padding-top: 7px; }
.fields .spin { display: flex; height: 20px; margin-top: 1px; border: 1px solid #adadad; background: #fff; }
.fields .spin input { flex: 1; min-width: 0; height: 16px; border: 0; border-left: 1px solid #000; padding: 0; }
.spin > span { width: 15px; display: grid; grid-template-rows: 1fr 1fr; }
.spin button { display: grid; place-items: center; border: 1px solid #adadad; background: #e6e6e6; }
.spin button:first-child { border-color: #8fc4ee; background: #dcecfa; }
.spin .up, .spin .down { width: 5px; height: 3px; background: #000; }
.fields .range { padding: 6px 10px 0; text-align: right; }
.fields #a + input { margin-left: 6px; }
.chart { width: 501px; height: 501px; margin: 8px 0 0 12px; background: #fff; border: solid #dcdcdc; border-width: 0 1px 1px 0; font-size: 13px; }
.chart .grid { stroke: #000; fill: none; shape-rendering: crispEdges; }
.chart polyline { fill: none; stroke: #418cf0; }
.chart .top { text-anchor: end; }
.chart .side { text-anchor: middle; }
.wstatus { display: flex; justify-content: space-between; align-items: flex-start; margin-top: 8px; padding: 2px 2px 2px 4px; border-top: 1px solid #d7d7d7; font: 11px/17px "Open Sans", sans-serif; }
.wstatus svg { align-self: flex-end; }

.toast { position: absolute; right: 0; top: 636px; width: 360px; height: 80px; display: flex; gap: 13px; padding: 8px 40px 0 13px; border: 1px solid #484848; background: #1f1f1f; color: #a6a6a6; font: 14px/20px "Open Sans", sans-serif; }
.toast svg { margin-top: 10px; }
.toast strong { color: #fff; font-size: 13px; font-weight: 600; }
```
